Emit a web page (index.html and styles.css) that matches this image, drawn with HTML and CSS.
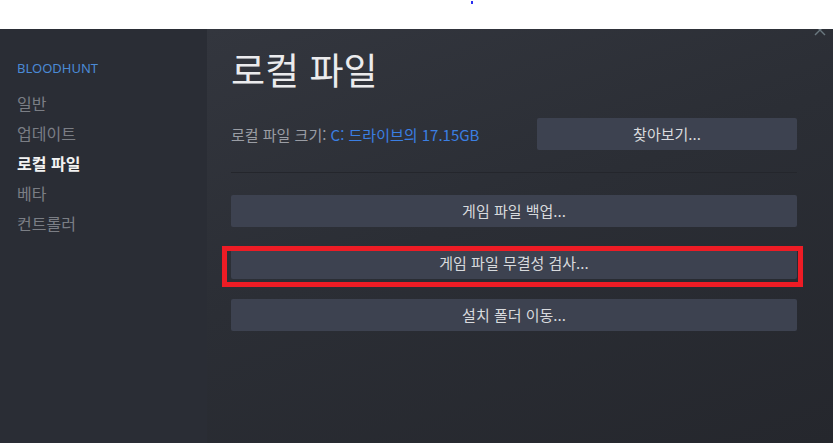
FILE: index.html
```html
<!DOCTYPE html>
<html lang="ko">
<head>
<meta charset="utf-8">
<link rel="stylesheet" href="styles.css">
</head>
<body>
<div class="topband"><span class="dot"></span></div>
<div class="app">
  <svg class="close" width="12" height="12" viewBox="0 0 12 12"><path d="M1 1L11 11M11 1L1 11" stroke="#6a787f" stroke-width="1.4" fill="none"/></svg>
  <nav class="sidebar">
    <div class="game">BLOODHUNT</div>
    <div class="item">일반</div>
    <div class="item">업데이트</div>
    <div class="item active">로컬 파일</div>
    <div class="item">베타</div>
    <div class="item">컨트롤러</div>
  </nav>
  <main class="main">
    <h1 class="title">로컬 파일</h1>
    <div class="sizerow">
      <div class="size">로컬 파일 크기: <span class="drive">C: 드라이브의 17.15GB</span></div>
      <div class="btn browse">찾아보기...</div>
    </div>
    <div class="sep"></div>
    <div class="btn wide">게임 파일 백업...</div>
    <div class="hl-wrap">
      <div class="btn wide">게임 파일 무결성 검사...</div>
      <div class="highlight"></div>
    </div>
    <div class="btn wide">설치 폴더 이동...</div>
  </main>
</div>
</body>
</html>
```
FILE: styles.css
```css
html, body {
  margin: 0;
  padding: 0;
  background: #ffffff;
  font-family: "Noto Sans CJK KR", "Noto Sans", sans-serif;
}
.topband {
  height: 29px;
  background: #ffffff;
  position: relative;
}
.dot {
  position: absolute;
  left: 471px;
  top: 1px;
  width: 2px;
  height: 3px;
  background: #2a2ff0;
}
.app {
  position: relative;
  display: flex;
  height: 414px;
  overflow: hidden;
}
.close {
  position: absolute;
  right: 7px;
  top: -5px;
}
.sidebar {
  width: 207px;
  flex: none;
  background: #2a2d35;
  padding: 29px 0 0 17px;
  box-sizing: border-box;
}
.game {
  color: #4a8ad6;
  font-size: 13px;
  line-height: 20px;
  height: 20px;
  margin-bottom: 10px;
  font-family: "Noto Sans", "Noto Sans CJK KR", sans-serif;
}
.item {
  color: #7b7e85;
  font-size: 16px;
  line-height: 30px;
  height: 30px;
}
.item.active {
  color: #f2f2f2;
  font-weight: 700;
}
.main {
  flex: 1;
  background: linear-gradient(160deg, #33363e 0%, #2b2e35 45%, #25272d 100%);
  padding: 20px 36px 0 24px;
  box-sizing: border-box;
}
.title {
  margin: 0;
  font-size: 37px;
  font-weight: 400;
  line-height: 40px;
  height: 40px;
  color: #ebebed;
}
.sizerow {
  margin-top: 29px;
  height: 32px;
  display: flex;
  align-items: center;
  justify-content: space-between;
}
.size {
  color: #9a9da4;
  font-size: 15px;
}
.drive {
  color: #3b7fe3;
}
.btn {
  background: #3d4250;
  border-radius: 2px;
  color: #d8dadd;
  font-size: 15px;
  height: 32px;
  line-height: 32px;
  text-align: center;
}
.browse {
  width: 260px;
}
.sep {
  margin-top: 22px;
  height: 1px;
  background: #24262c;
}
.wide {
  margin-top: 22px;
}
.hl-wrap {
  position: relative;
  margin-top: 20px;
}
.hl-wrap .wide {
  margin-top: 0;
}
.hl-wrap + .wide {
  margin-top: 20px;
}
.highlight {
  position: absolute;
  left: -9px;
  top: -1px;
  width: 581px;
  height: 41px;
  border: 5px solid #ee1c25;
  box-sizing: border-box;
  pointer-events: none;
}
```
